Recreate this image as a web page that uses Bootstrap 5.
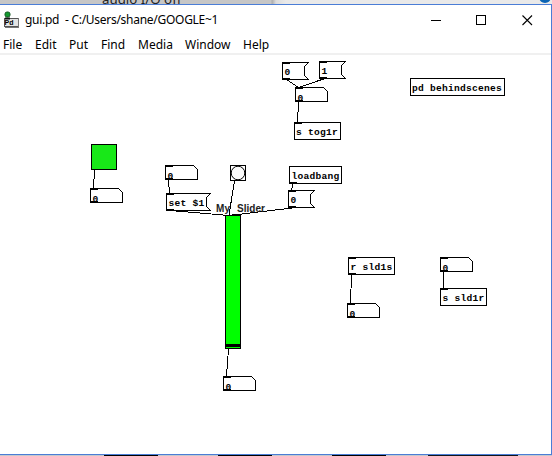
<!DOCTYPE html>
<html lang="en">
<head>
<meta charset="utf-8">
<meta name="viewport" content="width=device-width, initial-scale=1">
<title>gui.pd</title>
<link href="https://cdn.jsdelivr.net/npm/bootstrap@5.3.0/dist/css/bootstrap.min.css" rel="stylesheet">
<style>
body{font-family:"Noto Sans","Open Sans",sans-serif;font-size:12px;line-height:16px;color:#000}
.desk-top{height:4px;background:linear-gradient(90deg,#c6c6c6 0 271px,#adadad 272px,#dcdcdc 276px,#e9e9e9 286px)}
.desk-top span{margin-left:102px;line-height:16px;margin-top:-9px;font-size:13.300px;color:#222}
.corner-dot{width:12px;height:12px;border-radius:50%;background:#0b64b4;margin:-9px 1px 0 auto}
.pd-window{border:1px solid #4a7dd6;border-left:0;height:451px}
.title-row{height:29px}
.title-row svg{display:block}
.title-text{margin-left:6px;width:40px;font-size:12px;letter-spacing:-.3px;white-space:nowrap}
.title-path{font-size:12px;letter-spacing:-.28px}
.caption-btn{width:46px;height:28px}
.menu-row{height:19px;padding-left:3px}
.menu-row span{white-space:nowrap;font-size:12px;padding-top:2px}
.patch{height:401px;border-top:2px solid #f0f0f0}
.patch svg{display:block}
.mono{font:bold 9.600px "Liberation Mono",monospace;letter-spacing:.24px}
.w1{width:32px}.w2{width:34px}.w3{width:32px}.w4{width:37px}.w5{width:47px}.w6{width:58px}
.desk-bottom{height:1px;background:linear-gradient(90deg,#c5c8cd 0 104px,#000 104px 158px,#c5c8cd 158px 218px,#000 218px 272px,#c5c8cd 272px 332px,#000 332px 386px,#c5c8cd 386px 428px,#10151b 428px 518px,#c5c8cd 518px)}
</style>
</head>
<body class="m-0 overflow-hidden bg-white">
<div class="desk-top d-flex overflow-hidden"><span>audio I/O off</span><i class="corner-dot"></i></div>
<main class="pd-window d-flex flex-column">
  <header class="title-row d-flex align-items-center">
    <svg width="19" height="28" viewBox="0 5 19 28">
      <rect x="4.500" y="17.500" width="14" height="8" fill="#e4e4e4" stroke="#555"/>
      <path d="M5 26.500H19M18.500 17V26" stroke="#777"/>
      <rect x="5" y="11" width="5" height="5" rx="2" fill="#139b2e" stroke="#155c25"/>
      <path d="M5 17.500H10" stroke="#111" stroke-width="2"/>
      <text x="4.500" y="24" font-family="Liberation Sans" font-weight="bold" font-size="7" textLength="9">Pd</text>
    </svg>
    <span class="title-text">gui.pd</span><span class="title-path">- C:/Users/shane/GOOGLE~1</span>
    <div class="d-flex ms-auto">
      <div class="caption-btn"><svg width="46" height="28"><path d="M18 14.500H28" stroke="#000"/></svg></div>
      <div class="caption-btn"><svg width="46" height="28"><rect x="17.500" y="9.500" width="9" height="9" fill="none" stroke="#000"/></svg></div>
      <div class="caption-btn"><svg width="46" height="28"><path d="M17.500 9.500L27 19M27 9.500L17.500 19" stroke="#000" stroke-width="1.100"/></svg></div>
    </div>
  </header>
  <nav class="menu-row d-flex align-items-center">
    <span class="w1">File</span><span class="w2">Edit</span><span class="w3">Put</span><span class="w4">Find</span><span class="w5">Media</span><span class="w6">Window</span><span>Help</span>
  </nav>
  <section class="patch">
    <svg width="551" height="399" viewBox="0 55 551 399" fill="none" stroke="#000" stroke-width="1">
      <defs>
        <g id="num"><path d="M.5.500H28.500L32.500 4.500V14.500H.5Z"/><path d="M1 1.500H8M1 13.500H8"/></g>
        <g id="msg"><path d="M.5.500H26.500L22.500 4.500V13.500L26.500 17.500H.5Z"/><path d="M1 1.500H8M1 16.500H8"/></g>
      </defs>
      <g shape-rendering="crispEdges">
        <path d="M286.500 79.500L298.500 87.500L323.500 79M298.500 102L297.500 122"/>
        <path d="M94.500 170L93.500 188M168.500 180L169.500 193M170.500 210.500L229 215.500M234.500 181L229 215M293 184L291.500 190M292 208L229 215.500M228.500 349L226.500 376"/>
        <path d="M351.500 275L350.500 303M443.500 272V288"/>
        <use href="#msg" x="282" y="62"/><use href="#msg" x="319" y="61"/><use href="#msg" x="288" y="190"/>
        <use href="#num" x="295" y="87"/><use href="#num" x="90" y="188"/><use href="#num" x="165" y="165"/>
        <use href="#num" x="223" y="376"/><use href="#num" x="347" y="303"/><use href="#num" x="440" y="257"/>
        <rect x="294.500" y="122.500" width="46" height="17"/><path d="M295 123.500H302"/>
        <rect x="410.500" y="78.500" width="94" height="17"/>
        <rect x="91.500" y="144.500" width="25" height="25" fill="#18e818"/>
        <path d="M166.500 193.500H210.500L206.500 197.500V206.500L210.500 210.500H166.500ZM167 194.500H174M167 209.500H174"/>
        <rect x="230.500" y="165.500" width="15" height="15"/>
        <rect x="289.500" y="166.500" width="52" height="17"/><path d="M290 182.500H297"/>
        <rect x="225.500" y="215.500" width="15" height="133" fill="#0f0"/>
        <path d="M225 345.500H241" stroke-width="3"/><path d="M232 214.500H240"/>
        <rect x="348.500" y="257.500" width="46" height="17"/><path d="M349 258.500H356M349 273.500H356"/>
        <rect x="440.500" y="288.500" width="46" height="17"/><path d="M441 289.500H448"/>
      </g>
      <circle cx="238" cy="173" r="6.800" fill="#fafafa"/>
      <g class="mono" fill="#000" stroke="none">
        <text x="284.500" y="75">0</text><text x="321.500" y="74">1</text><text x="297.500" y="101">0</text>
        <text x="296" y="135">s tog1r</text><text x="412" y="91">pd behindscenes</text>
        <text x="92.500" y="202">0</text><text x="167.500" y="179">0</text><text x="168.500" y="206">set $1</text>
        <text x="291.500" y="179">loadbang</text><text x="290.500" y="203">0</text><text x="225.500" y="390">0</text>
        <text x="350.500" y="270">r sld1s</text><text x="349.500" y="317">0</text><text x="442.500" y="271">0</text><text x="442.500" y="301">s sld1r</text>
      </g>
      <g fill="#222" stroke="none" font-family="Liberation Sans" font-weight="bold" font-size="10">
        <text x="216" y="212" textLength="14">My</text><text x="237" y="212" textLength="28">Slider</text>
      </g>
    </svg>
  </section>
</main>
<div class="desk-bottom"></div>
</body>
</html>
